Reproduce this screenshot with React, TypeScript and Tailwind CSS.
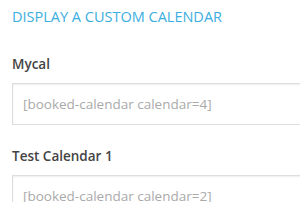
export default function App() {
  const items = [
    { name: 'Mycal', code: '[booked-calendar calendar=4]' },
    { name: 'Test Calendar 1', code: '[booked-calendar calendar=2]' },
  ]

  return (
    <div className="w-[300px] h-[202px] overflow-hidden bg-white pl-3 font-['Open_Sans',sans-serif]">
      <h3 className="pt-[7px] text-[14.5px] leading-[20px] text-[#3aaee0] uppercase">Display a Custom Calendar</h3>
      <div className="mt-[28px] flex flex-col">
        {items.map((item) => (
          <div key={item.name} className="mb-[22px]">
            <div className="text-[13.5px] leading-[18px] font-semibold text-[#444]">{item.name}</div>
            <div className="mt-[10px] w-[320px] h-[42px] flex items-center pl-[10px] border border-[#ddd] shadow-[inset_0_1px_2px_rgba(0,0,0,0.07)] text-[13.5px] text-[#aaa]">
              {item.code}
            </div>
          </div>
        ))}
      </div>
    </div>
  )
}
